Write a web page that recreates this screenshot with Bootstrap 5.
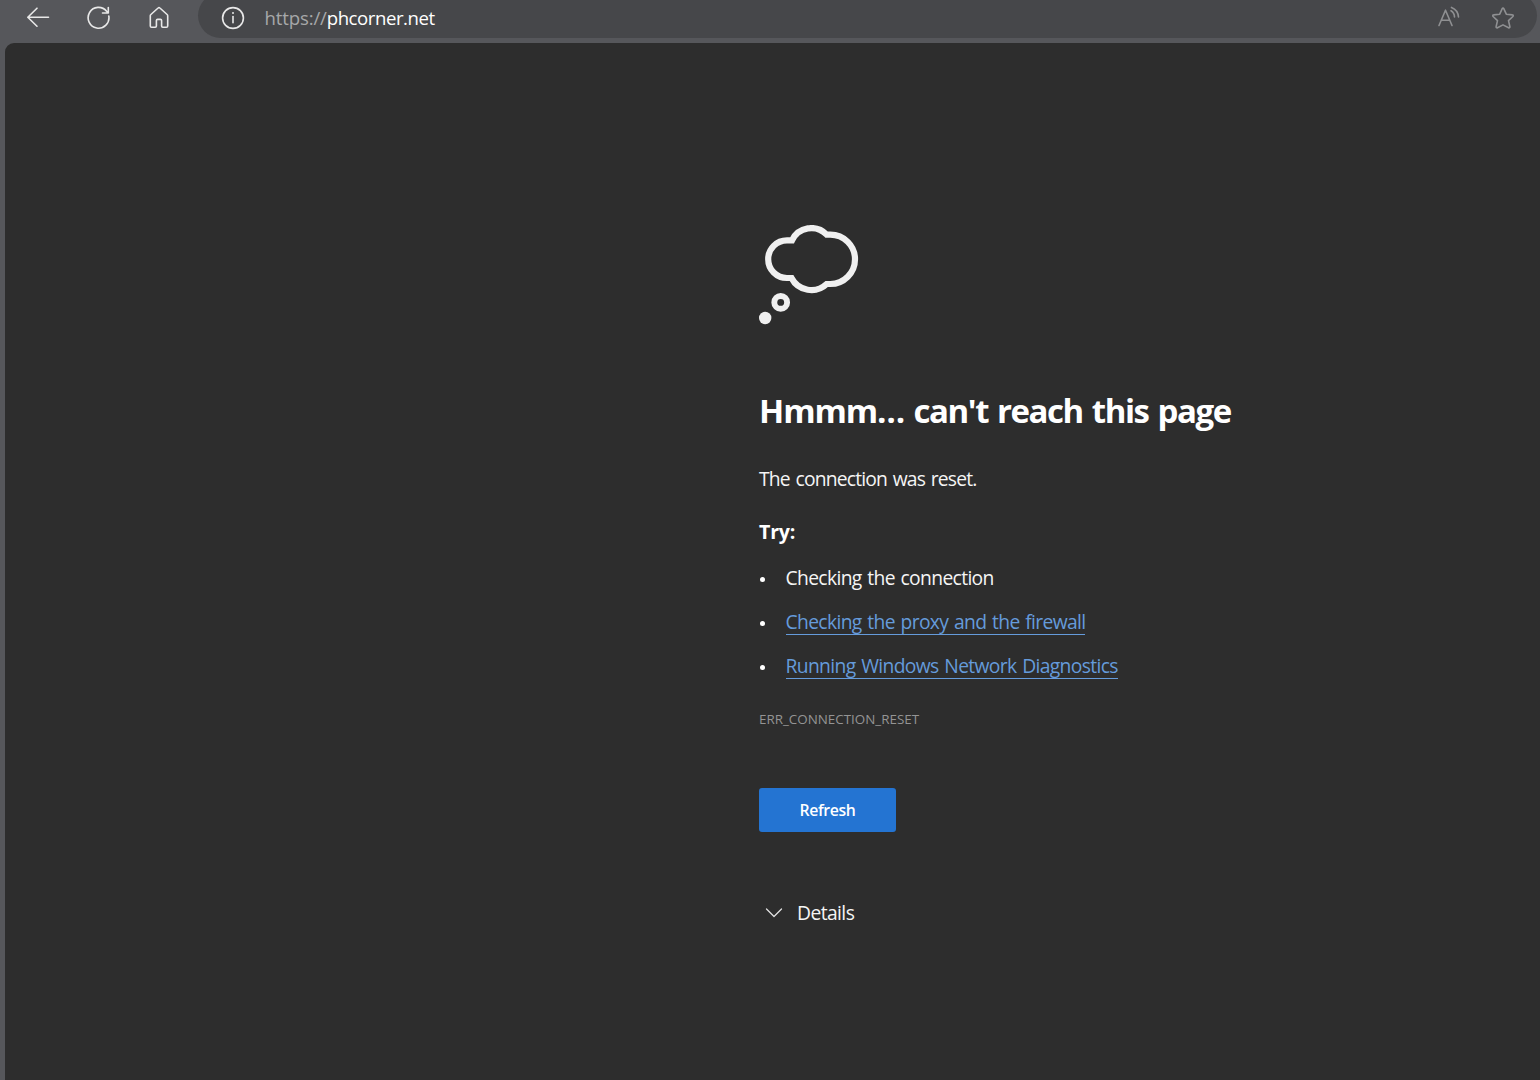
<!DOCTYPE html>
<html lang="en">
<head>
<meta charset="utf-8">
<meta name="viewport" content="width=device-width, initial-scale=1">
<title>phcorner.net</title>
<link rel="stylesheet" href="https://cdn.jsdelivr.net/npm/bootstrap@5.3.0/dist/css/bootstrap.min.css">
<style>
body{background:#56575b;font-family:"Open Sans","Noto Sans",sans-serif;font-size:19.3px;line-height:28px;color:#f5f5f5;height:100vh}
svg{display:block;flex:none;fill:none;stroke-linecap:round;stroke-linejoin:round}
.toolbar{height:43px}
.toolbar svg{stroke:#e8e8e8;stroke-width:1.6}
.nav-icons{padding-left:26px;gap:36.4px;height:36px;width:198px}
.omnibox{height:45px;margin-top:-7px;padding:7px 21px 2px 23px;background:#46474a;border-radius:22.5px;margin-right:3px}
.url-text{margin-left:19.5px;font-size:18.6px;letter-spacing:-.15px;color:#a6a7a9;white-space:nowrap}
.url-host{color:#fff;letter-spacing:-.45px}
.toolbar .tool-icons{gap:30px;margin-right:1px}
.toolbar .tool-icons svg{stroke:#8f9092}
.viewport-pane{margin-left:5px;background:#2d2d2d;border-top-left-radius:9px}
.error-block{margin-left:754px;padding-top:182px}
.error-title{font-size:33px;line-height:44px;margin:64px 0 32px;color:#fff;font-weight:700;white-space:nowrap;letter-spacing:-1.45px;word-spacing:1.9px}
.t-hmm{letter-spacing:-1.1px}
.t-reset{letter-spacing:-.82px;word-spacing:1.5px}
.try-title{font-size:19.6px;line-height:28px;margin:25px 0 18px;font-weight:700;color:#fff;letter-spacing:-.2px}
.tips{gap:16px;letter-spacing:-.65px;word-spacing:1.3px}
.tips li{padding-left:26.5px;position:relative;white-space:nowrap}
.tips li::before{content:"";position:absolute;left:1px;top:13px;width:5px;height:5px;border-radius:50%;background:#fff}
.tips a{color:#659bdb;text-decoration:none;display:inline-block;height:27px;border-bottom:1px solid #659bdb;vertical-align:top}
.err-code{font-size:13.4px;line-height:20px;color:#949494;margin:29px 0 59px}
.btn-refresh{width:137px;height:44px;background:#2474d2;border-radius:3px;color:#fff;font-size:15.8px;font-weight:600;line-height:24px;letter-spacing:-.4px}
.btn-refresh:hover{background:#2b7bd9;color:#fff}
.details-row{margin-top:67px;padding-left:6px;gap:14px;letter-spacing:-.58px}
</style>
</head>
<body class="d-flex flex-column overflow-hidden">
<header class="toolbar d-flex align-items-start flex-shrink-0">
  <nav class="nav-icons d-flex align-items-center flex-shrink-0">
    <svg width="24" height="24" viewBox="0 0 24 24"><path d="M22.5 11.2H2M11 2.2L1.8 11.2L11 20.2"/></svg>
    <svg width="24" height="24" viewBox="0 0 24 24"><path d="M22.8 10A10.4 10.4 0 1 1 20.6 5.2L22.3 7M22.3 1.5V7H16.5"/></svg>
    <svg width="24" height="24" viewBox="0 0 24 24"><path d="M3.3 9.8V20a1.3 1.3 0 0 0 1.3 1.3H8.2a1.2 1.2 0 0 0 1.2-1.2V14.6a1.2 1.2 0 0 1 1.2-1.2h2.8a1.2 1.2 0 0 1 1.2 1.2V20.1a1.2 1.2 0 0 0 1.2 1.2H19.4a1.3 1.3 0 0 0 1.3-1.3V9.8a1.8 1.8 0 0 0-.6-1.3L12.9 2a1.3 1.3 0 0 0-1.8 0L3.9 8.5a1.8 1.8 0 0 0-.6 1.3Z"/></svg>
  </nav>
  <div class="omnibox d-flex align-items-center flex-grow-1">
    <svg width="24" height="24" viewBox="0 0 24 24"><circle cx="12" cy="12" r="10.4"/><path d="M12 10.5V16.8"/><path d="M12 6.9V7.1" stroke-width="2"/></svg>
    <div class="url-text flex-grow-1">https://<span class="url-host">phcorner.net</span></div>
    <div class="tool-icons d-flex align-items-center">
      <svg width="24" height="24" viewBox="0 0 24 24"><path d="M2 19.5L8.5 4.2L15 19.5M4.4 14.2H12.6M14 4.8A7.5 7.5 0 0 1 17.5 11M14.5 1.4A11 11 0 0 1 21.5 11"/></svg>
      <svg width="24" height="24" viewBox="0 0 24 24"><path d="M11.2 2.6a.9.9 0 0 1 1.6 0L15.3 8.2L21.4 8.9a.9.9 0 0 1 .5 1.6L17.5 14.6L18.9 20.8a.9.9 0 0 1-1.3 1L12 18.9L6.4 21.8a.9.9 0 0 1-1.3-1L6.5 14.6L2.1 10.5a.9.9 0 0 1 .5-1.6L8.7 8.2Z"/></svg>
    </div>
  </div>
</header>
<main class="viewport-pane flex-grow-1">
  <div class="error-block">
    <svg width="100" height="100" viewBox="0 0 100 100" stroke="#f0f0f0" stroke-width="6.2"><path stroke-linejoin="miter" d="M33 15.4H28A18.8 18.8 0 0 0 28 53H32.5A22.4 22.4 0 0 0 67.7 59H71.3A24.7 24.7 0 0 0 71.3 9.6H67.7A21.4 21.4 0 0 0 33 15.4Z"/><circle cx="21.7" cy="77.4" r="6.4" stroke-width="5.9"/><circle cx="6.2" cy="93" r="6.2" fill="#f0f0f0" stroke="none"/></svg>
    <h1 class="error-title"><span class="t-hmm">Hmmm… </span>can't reach this page</h1>
    <p class="mb-0"><span class="t-reset">The connection was reset.</span></p>
    <h2 class="try-title">Try:</h2>
    <ul class="tips list-unstyled d-flex flex-column mb-0">
      <li>Checking the connection</li>
      <li><a href="#">Checking the proxy and the firewall</a></li>
      <li><a href="#">Running Windows Network Diagnostics</a></li>
    </ul>
    <p class="err-code">ERR_CONNECTION_RESET</p>
    <button type="button" class="btn btn-refresh border-0 p-0 d-block">Refresh</button>
    <div class="details-row d-flex align-items-center">
      <svg width="18" height="18" viewBox="0 0 18 18" stroke="#e0e0e0" stroke-width="1.3"><path d="M1.5 5L9 12.5L16.5 5"/></svg>
      <span>Details</span>
    </div>
  </div>
</main>
<script src="https://cdn.jsdelivr.net/npm/bootstrap@5.3.0/dist/js/bootstrap.bundle.min.js"></script>
</body>
</html>
